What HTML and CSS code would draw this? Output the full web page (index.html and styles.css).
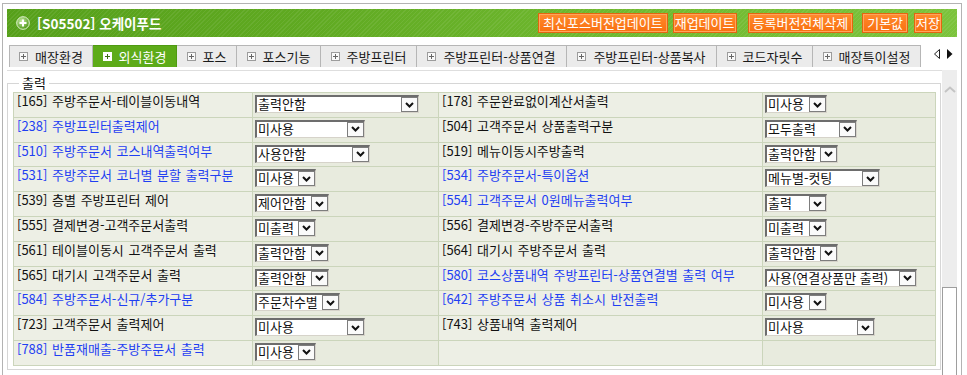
FILE: index.html
```html
<!DOCTYPE html>
<html lang="ko">
<head>
  <meta charset="UTF-8" />
  <meta name="viewport" content="width=device-width, initial-scale=1.0" />
  <title>[S05502] 오케이푸드 - 외식환경</title>
  <link rel="stylesheet" href="styles.css">
</head>
<body>
  <div class="frame">
    <div class="titlebar">
      <h1 class="title">
        <svg class="title-icon" width="14" height="14" viewBox="0 0 14 14">
          <defs>
            <radialGradient id="orb" cx="40%" cy="35%" r="65%">
              <stop offset="0" stop-color="#c9eca8" />
              <stop offset="1" stop-color="#4f9a18" />
            </radialGradient>
          </defs>
          <circle cx="7" cy="7" r="6.3" fill="url(#orb)" stroke="#e4f4d4" stroke-width="1" />
          <rect x="6" y="3.5" width="2" height="7" fill="#fff" />
          <rect x="3.5" y="6" width="7" height="2" fill="#fff" />
        </svg>
        [S05502] 오케이푸드
      </h1>
      <div class="actions">
        <button class="btn">최신포스버전업데이트</button>
        <button class="btn btn-tight">재업데이트</button>
        <button class="btn btn-wide">등록버전전체삭제</button>
        <button class="btn btn-gap">기본값</button>
        <button class="btn btn-tight btn-last">저장</button>
      </div>
    </div>

    <div class="tabbar">
      <ul class="tabs">
        <li class="tab tab-m"><i class="tab-icon"></i>매장환경</li>
        <li class="tab tab-m active"><i class="tab-icon"></i>외식환경</li>
        <li class="tab tab-s"><i class="tab-icon"></i>포스</li>
        <li class="tab tab-m"><i class="tab-icon"></i>포스기능</li>
        <li class="tab tab-l"><i class="tab-icon"></i>주방프린터</li>
        <li class="tab tab-xl"><i class="tab-icon"></i>주방프린터-상품연결</li>
        <li class="tab tab-xl"><i class="tab-icon"></i>주방프린터-상품복사</li>
        <li class="tab tab-l"><i class="tab-icon"></i>코드자릿수</li>
        <li class="tab tab-ml"><i class="tab-icon"></i>매장특이설정</li>
      </ul>
      <div class="tab-arrows">
        <svg width="19" height="10" viewBox="0 0 19 10">
          <polygon points="5.5,0.5 5.5,9.5 0.5,5" fill="#fff" stroke="#222" stroke-width="1" />
          <polygon points="13,0 13,10 18.5,5" fill="#111" />
        </svg>
      </div>
    </div>

    <div class="content">
      <div class="panel">
        <fieldset class="group">
          <legend>출력</legend>
          <table class="opts">
            <colgroup>
              <col class="c-label1">
              <col class="c-sel1">
              <col class="c-label2">
              <col class="c-sel2">
            </colgroup>
            <tr>
              <td class="lbl">[165] 주방주문서-테이블이동내역</td>
              <td class="val"><span class="sel w164"><span class="sel-val">출력안함</span><span class="sel-btn"></span></span></td>
              <td class="lbl">[178] 주문완료없이계산서출력</td>
              <td class="val"><span class="sel w62"><span class="sel-val">미사용</span><span class="sel-btn"></span></span></td>
            </tr>
            <tr>
              <td class="lbl link">[238] 주방프린터출력제어</td>
              <td class="val"><span class="sel w110"><span class="sel-val">미사용</span><span class="sel-btn"></span></span></td>
              <td class="lbl">[504] 고객주문서 상품출력구분</td>
              <td class="val"><span class="sel w92"><span class="sel-val">모두출력</span><span class="sel-btn"></span></span></td>
            </tr>
            <tr>
              <td class="lbl link">[510] 주방주문서 코스내역출력여부</td>
              <td class="val"><span class="sel w115"><span class="sel-val">사용안함</span><span class="sel-btn"></span></span></td>
              <td class="lbl">[519] 메뉴이동시주방출력</td>
              <td class="val"><span class="sel w73"><span class="sel-val">출력안함</span><span class="sel-btn"></span></span></td>
            </tr>
            <tr>
              <td class="lbl link">[531] 주방주문서 코너별 분할 출력구분</td>
              <td class="val"><span class="sel w61"><span class="sel-val">미사용</span><span class="sel-btn"></span></span></td>
              <td class="lbl link">[534] 주방주문서-특이옵션</td>
              <td class="val"><span class="sel w115"><span class="sel-val">메뉴별-컷팅</span><span class="sel-btn"></span></span></td>
            </tr>
            <tr>
              <td class="lbl">[539] 층별 주방프린터 제어</td>
              <td class="val"><span class="sel w74"><span class="sel-val">제어안함</span><span class="sel-btn"></span></span></td>
              <td class="lbl link">[554] 고객주문서 0원메뉴출력여부</td>
              <td class="val"><span class="sel w62"><span class="sel-val">출력</span><span class="sel-btn"></span></span></td>
            </tr>
            <tr>
              <td class="lbl">[555] 결제변경-고객주문서출력</td>
              <td class="val"><span class="sel w61"><span class="sel-val">미출력</span><span class="sel-btn"></span></span></td>
              <td class="lbl">[556] 결제변경-주방주문서출력</td>
              <td class="val"><span class="sel w62"><span class="sel-val">미출력</span><span class="sel-btn"></span></span></td>
            </tr>
            <tr>
              <td class="lbl">[561] 테이블이동시 고객주문서 출력</td>
              <td class="val"><span class="sel w74"><span class="sel-val">출력안함</span><span class="sel-btn"></span></span></td>
              <td class="lbl">[564] 대기시 주방주문서 출력</td>
              <td class="val"><span class="sel w73"><span class="sel-val">출력안함</span><span class="sel-btn"></span></span></td>
            </tr>
            <tr>
              <td class="lbl">[565] 대기시 고객주문서 출력</td>
              <td class="val"><span class="sel w74"><span class="sel-val">출력안함</span><span class="sel-btn"></span></span></td>
              <td class="lbl link">[580] 코스상품내역 주방프린터-상품연결별 출력 여부</td>
              <td class="val"><span class="sel w152"><span class="sel-val">사용(연결상품만 출력)</span><span class="sel-btn"></span></span></td>
            </tr>
            <tr>
              <td class="lbl link">[584] 주방주문서-신규/추가구분</td>
              <td class="val"><span class="sel w85"><span class="sel-val">주문차수별</span><span class="sel-btn"></span></span></td>
              <td class="lbl link">[642] 주방주문서 상품 취소시 반전출력</td>
              <td class="val"><span class="sel w62"><span class="sel-val">미사용</span><span class="sel-btn"></span></span></td>
            </tr>
            <tr>
              <td class="lbl">[723] 고객주문서 출력제어</td>
              <td class="val"><span class="sel w110"><span class="sel-val">미사용</span><span class="sel-btn"></span></span></td>
              <td class="lbl">[743] 상품내역 출력제어</td>
              <td class="val"><span class="sel w110"><span class="sel-val">미사용</span><span class="sel-btn"></span></span></td>
            </tr>
            <tr>
              <td class="lbl link">[788] 반품재매출-주방주문서 출력</td>
              <td class="val"><span class="sel w61"><span class="sel-val">미사용</span><span class="sel-btn"></span></span></td>
              <td class="lbl"></td>
              <td class="val"></td>
            </tr>
          </table>
        </fieldset>
      </div>

      <div class="scrollbar">
        <div class="scroll-up">
          <svg width="12" height="7" viewBox="0 0 12 7">
            <polyline points="1,6 6,1.5 11,6" fill="none" stroke="#c4c4c4" stroke-width="2" />
          </svg>
        </div>
        <div class="scroll-thumb"></div>
      </div>
    </div>
  </div>
</body>
</html>
```

FILE: styles.css
```css
:root {
  --frame: #b3b3b3;
  --green: #5dab19;
  --cell-border: #cbd5bb;
  --cell-bg: #edefe5;
  --cell-bg-alt: #e8ebde;
  --link: #1f3ff2;
}

* {
  box-sizing: border-box;
}

body {
  margin: 0;
  background: #fff;
  color: #111;
  font-family: "Noto Sans CJK KR", "Noto Sans", sans-serif;
  font-size: 13px;
  overflow: hidden;
}

.frame {
  margin: 3px 0 0 2px;
  width: 960px;
  height: 372px;
  border: 1px solid var(--frame);
  border-bottom: none;
  padding: 5px 4px 0 4px;
}

/* title bar */

.titlebar {
  height: 28px;
  display: flex;
  align-items: center;
  justify-content: space-between;
  padding: 0 15px 0 9px;
  background:
    repeating-linear-gradient(135deg, rgba(255, 255, 255, 0.07) 0 1px, rgba(255, 255, 255, 0) 1px 3px),
    linear-gradient(90deg, #56a01a 0%, #5fa921 30%, #70b930 65%, #7cc33c 100%);
}

.title {
  margin: 0;
  display: flex;
  align-items: center;
  gap: 7px;
  color: #fff;
  font-size: 13.5px;
  font-weight: bold;
  line-height: 16px;
}

.title-icon {
  display: block;
}

.actions {
  display: flex;
  gap: 5px;
}

.btn {
  height: 20px;
  padding: 0 4px;
  border: 1px solid #e3650f;
  box-shadow: inset 0 0 0 1px #ffa45c;
  background: linear-gradient(#ff8a2e, #f9700f);
  color: #fff;
  font-family: inherit;
  font-size: 13px;
  line-height: 16px;
  white-space: nowrap;
  cursor: pointer;
}

.btn-tight {
  padding: 0 1px;
}

.btn-wide {
  margin-left: 6px;
}

.btn-gap {
  margin-left: 4px;
}

.btn-last {
  margin-left: 1px;
}

/* tabs */

.tabbar {
  display: flex;
  height: 22px;
  margin-top: 8px;
  padding-left: 2px;
}

.tabs {
  display: flex;
  margin: 0;
  padding: 0;
  list-style: none;
}

.tab {
  display: flex;
  align-items: center;
  justify-content: center;
  gap: 7px;
  height: 22px;
  background: #ebebeb;
  border: 1px solid #b6b6b6;
  border-left: none;
  border-bottom: none;
  color: #1a1a1a;
  font-size: 13px;
  white-space: nowrap;
}

.tab:first-child {
  border-left: 1px solid #b6b6b6;
}

.tab-s { width: 60px; }
.tab-m { width: 84px; }
.tab-l { width: 96px; }
.tab-ml { width: 108px; }
.tab-xl { width: 150px; }

.tab-icon {
  width: 9px;
  height: 9px;
  border: 1px solid #9c9c9c;
  background:
    linear-gradient(#666, #666) center / 5px 1px no-repeat,
    linear-gradient(#666, #666) center / 1px 5px no-repeat,
    #f9f9f9;
}

.tab.active {
  background: var(--green);
  border-color: #4f9a12;
  color: #fff;
}

.tab.active .tab-icon {
  border-color: #fff;
  background:
    linear-gradient(#3d6e14, #3d6e14) center / 5px 1px no-repeat,
    linear-gradient(#3d6e14, #3d6e14) center / 1px 5px no-repeat,
    #fff;
}

.tab-arrows {
  flex: 1;
  display: flex;
  justify-content: flex-end;
  padding: 4px 4px 0 0;
  background: #fff;
}

.tab-arrows svg {
  display: block;
}

/* content */

.content {
  display: flex;
  height: 305px;
  margin-top: 3px;
  overflow: hidden;
}

.panel {
  flex: 1;
  border-top: 1px solid #dedede;
}

.group {
  margin: 4px 1px 0 0;
  padding: 1px 4px 3px 5px;
  border: 1px solid #d6d6d6;
  min-width: 0;
}

.group legend {
  margin-left: 6px;
  padding: 0 3px;
  font-size: 13px;
  line-height: 16px;
}

.opts {
  width: 922px;
  table-layout: fixed;
  border-collapse: collapse;
  border: 1px solid var(--cell-border);
}

.c-label1 { width: 239px; }
.c-sel1 { width: 186px; }
.c-label2 { width: 324px; }
.c-sel2 { width: 173px; }

.opts tr {
  height: 24.8px;
}

.opts td {
  border: 1px solid var(--cell-border);
  vertical-align: top;
  white-space: nowrap;
}

.lbl {
  padding: 0 3px;
  background: var(--cell-bg);
  line-height: 16px;
  word-spacing: 1px;
}

.lbl.link {
  color: var(--link);
}

.val {
  padding: 2px 2px 0 2px;
  background: var(--cell-bg-alt);
}

/* old-style select box */

.sel {
  display: flex;
  height: 18px;
  background: #fff;
  border-top: 2px solid #6d6d6d;
  border-left: 2px solid #6d6d6d;
  border-right: 1px solid #d6d3ca;
  border-bottom: 1px solid #d6d3ca;
}

.sel-val {
  flex: 1;
  padding-left: 1px;
  font-size: 13px;
  line-height: 14px;
  white-space: nowrap;
}

.sel-btn {
  flex: none;
  width: 17px;
  height: 15px;
  border: 1px solid #7d7d7d;
  background:
    url("data:image/svg+xml,%3Csvg xmlns='http://www.w3.org/2000/svg' width='9' height='6' viewBox='0 0 9 6'%3E%3Cpolyline points='1,1 4.5,4.5 8,1' fill='none' stroke='%23111' stroke-width='2'/%3E%3C/svg%3E") center / 9px 6px no-repeat,
    #fafafa;
}

.w61 { width: 61px; }
.w62 { width: 62px; }
.w73 { width: 73px; }
.w74 { width: 74px; }
.w85 { width: 85px; }
.w92 { width: 92px; }
.w110 { width: 110px; }
.w115 { width: 115px; }
.w152 { width: 152px; }
.w164 { width: 164px; }

/* scrollbar */

.scrollbar {
  width: 16px;
  background: #ededed;
}

.scroll-up {
  height: 30px;
  display: flex;
  justify-content: center;
  padding-top: 16px;
}

.scroll-up svg {
  display: block;
}

.scroll-thumb {
  height: 120px;
  margin-top: 187px;
  background: #fff;
  border: 1px solid #9e9e9e;
}
```
